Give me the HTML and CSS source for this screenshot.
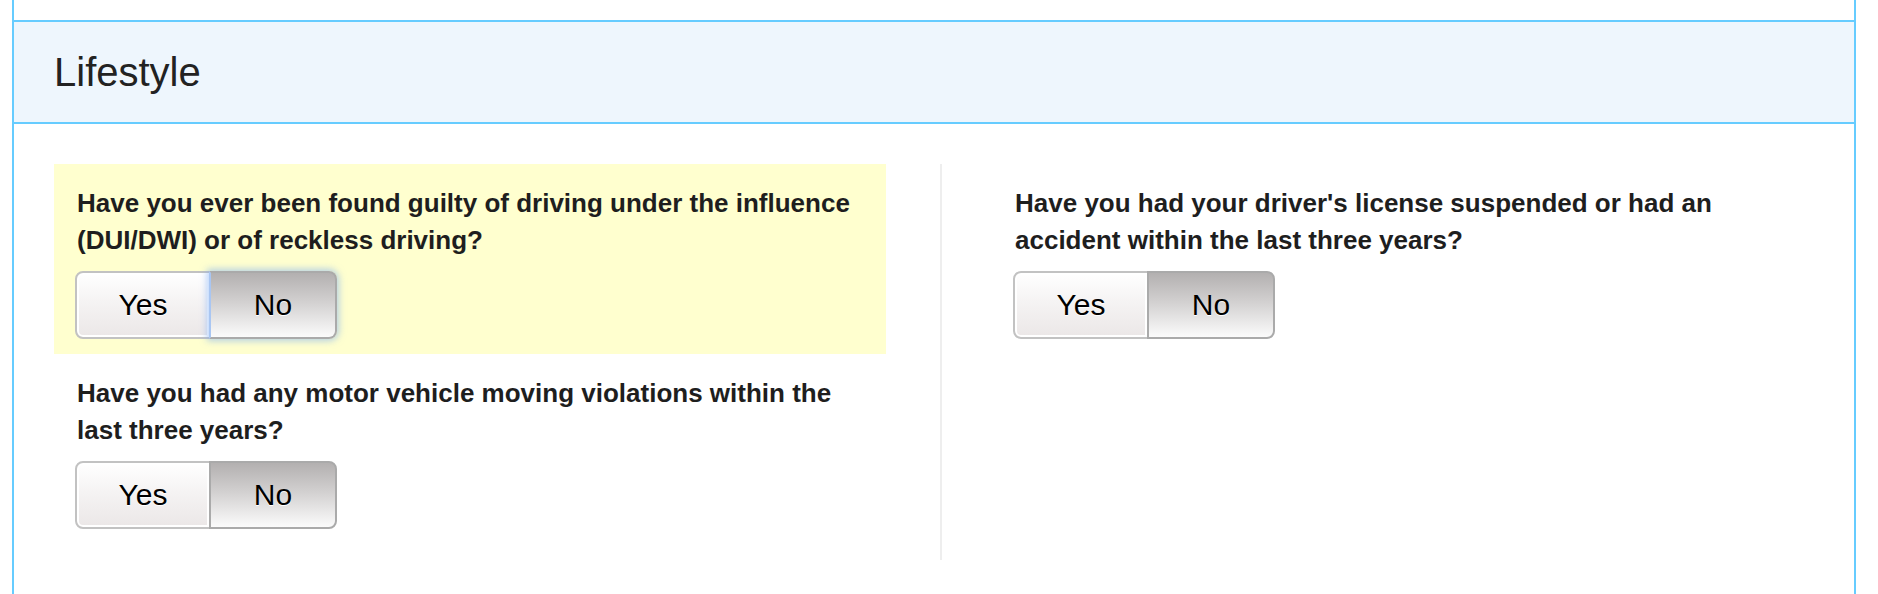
FILE: index.html
```html
<!DOCTYPE html>
<html lang="en">
<head>
<meta charset="utf-8">
<title>Lifestyle</title>
<link rel="stylesheet" href="styles.css">
</head>
<body>
<div class="panel">
  <div class="panel-heading">Lifestyle</div>
  <div class="panel-body">
    <div class="col col-left">
      <div class="question highlight">
        <div class="label">Have you ever been found guilty of driving under the influence (DUI/DWI) or of reckless driving?</div>
        <div class="btn-group">
          <span class="btn btn-yes">Yes</span>
          <span class="btn btn-no active focus">No</span>
        </div>
      </div>
      <div class="question">
        <div class="label">Have you had any motor vehicle moving violations within the last three years?</div>
        <div class="btn-group">
          <span class="btn btn-yes">Yes</span>
          <span class="btn btn-no active">No</span>
        </div>
      </div>
    </div>
    <div class="col col-right">
      <div class="question">
        <div class="label">Have you had your driver's license suspended or had an accident within the last three years?</div>
        <div class="btn-group">
          <span class="btn btn-yes">Yes</span>
          <span class="btn btn-no active">No</span>
        </div>
      </div>
    </div>
  </div>
</div>
</body>
</html>
```
FILE: styles.css
```css
html, body {
  margin: 0;
  padding: 0;
  background: #ffffff;
}
body {
  font-family: "Liberation Sans", Arial, Helvetica, sans-serif;
  color: #222222;
}
.panel {
  box-sizing: border-box;
  margin-left: 12px;
  width: 1844px;
  min-height: 594px;
  border-left: 2px solid #66ccff;
  border-right: 2px solid #66ccff;
  padding-top: 20px;
}
.panel-heading {
  height: 100px;
  line-height: 100px;
  border-top: 2px solid #66ccff;
  border-bottom: 2px solid #66ccff;
  background: #eef6fd;
  padding-left: 40px;
  font-size: 40px;
  color: #222222;
}
.panel-body {
  display: grid;
  grid-template-columns: 926px 1fr;
  padding-top: 40px;
}
.col-left {
  padding: 0 54px 16px 40px;
}
.col-right {
  border-left: 2px solid #eeeeee;
  padding: 0 30px 0 50px;
}
.question {
  padding: 21px 21px 15px 21px;
}
.question.highlight {
  background: #ffffcf;
}
.label {
  font-weight: bold;
  font-size: 26px;
  line-height: 37px;
  color: #1e1e1e;
  padding-left: 2px;
}
.btn-group {
  display: flex;
  margin-top: 12px;
}
.btn {
  display: block;
  box-sizing: border-box;
  height: 68px;
  line-height: 64px;
  font-size: 30px;
  text-align: center;
  color: #000000;
  text-shadow: 0 1px 0 #ffffff;
}
.btn-yes {
  width: 136px;
  border: 2px solid #c2c2c2;
  border-radius: 8px 0 0 8px;
  background: linear-gradient(to bottom, #ffffff 0%, #f4f2f2 50%, #ebe7e7 100%);
  box-shadow: inset 0 0 0 2px #ffffff;
}
.btn-no {
  width: 126px;
  border: 2px solid #aaaaaa;
  border-left: none;
  border-radius: 0 8px 8px 0;
  background: linear-gradient(to bottom, #f6f6f6 0%, #f6f6f6 100%);
}
.btn-no.active {
  border-left: 2px solid #aaaaaa;
  margin-left: -2px;
  width: 128px;
  background: linear-gradient(to bottom, #b3b0b0 0%, #d2d0d0 45%, #fbfbfb 100%);
}
.btn-no.focus {
  position: relative;
  border-left-color: #a9c6f2;
  box-shadow: 0 0 7px 2px rgba(120, 170, 245, 0.55);
}
```
